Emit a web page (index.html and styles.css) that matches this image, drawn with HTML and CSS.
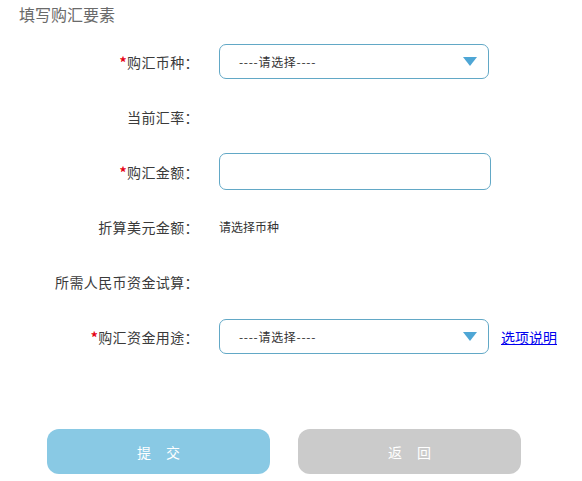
FILE: index.html
```html
<!DOCTYPE html>
<html lang="zh-CN">
<head>
<meta charset="utf-8">
<title>填写购汇要素</title>
<link rel="stylesheet" href="styles.css">
</head>
<body>
<div class="page">
  <h2 class="title">填写购汇要素</h2>
  <div class="form">
    <div class="row">
      <div class="label"><span class="req">*</span>购汇币种：</div>
      <div class="field">
        <div class="select"><span class="ph">----请选择----</span><span class="arrow"></span></div>
      </div>
    </div>
    <div class="row">
      <div class="label">当前汇率：</div>
      <div class="field"></div>
    </div>
    <div class="row">
      <div class="label"><span class="req">*</span>购汇金额：</div>
      <div class="field"><div class="input"></div></div>
    </div>
    <div class="row">
      <div class="label">折算美元金额：</div>
      <div class="field"><span class="value">请选择币种</span></div>
    </div>
    <div class="row">
      <div class="label">所需人民币资金试算：</div>
      <div class="field"></div>
    </div>
    <div class="row">
      <div class="label"><span class="req">*</span>购汇资金用途：</div>
      <div class="field">
        <div class="select"><span class="ph">----请选择----</span><span class="arrow"></span></div>
        <a class="link" href="#">选项说明</a>
      </div>
    </div>
  </div>
  <div class="buttons">
    <button class="btn btn-submit">提 交</button>
    <button class="btn btn-back">返 回</button>
  </div>
</div>
</body>
</html>
```

FILE: styles.css
```css
html, body {
  margin: 0;
  padding: 0;
  background: #fff;
}
body {
  font-family: "Noto Sans CJK SC", "Noto Sans", sans-serif;
  color: #333;
}
.page {
  width: 582px;
}
.title {
  margin: 0;
  height: 34px;
  padding-left: 19px;
  font-size: 16px;
  font-weight: normal;
  color: #6a6a6a;
  line-height: 28px;
}
.form {
  display: flex;
  flex-direction: column;
}
.row {
  display: flex;
  align-items: center;
  height: 55px;
}
.label {
  width: 199px;
  text-align: right;
  font-size: 14px;
  color: #3a3a3a;
  flex: none;
  letter-spacing: 0.4px;
}
.req {
  color: #e60012;
  font-weight: bold;
}
.field {
  margin-left: 20px;
  display: flex;
  align-items: center;
}
.select {
  box-sizing: border-box;
  width: 270px;
  height: 35px;
  border: 1px solid #62a8c6;
  border-radius: 7px;
  display: flex;
  align-items: center;
  justify-content: space-between;
  padding: 0 11px 0 19px;
}
.ph {
  font-size: 12px;
  color: #333;
  letter-spacing: 0.7px;
}
.arrow {
  width: 0;
  height: 0;
  border-left: 7px solid transparent;
  border-right: 7px solid transparent;
  border-top: 9px solid #4ea6d5;
}
.input {
  box-sizing: border-box;
  width: 272px;
  height: 37px;
  border: 1px solid #62a8c6;
  border-radius: 7px;
}
.value {
  font-size: 12px;
  color: #333;
}
.link {
  margin-left: 12px;
  font-size: 14px;
  color: #0000ee;
  text-decoration: underline;
}
.buttons {
  display: flex;
  gap: 28px;
  padding-left: 47px;
  margin-top: 65px;
}
.btn {
  width: 223px;
  height: 45px;
  border: none;
  border-radius: 12px;
  font-family: "Noto Sans CJK SC", sans-serif;
  font-size: 14px;
  color: #fff;
  letter-spacing: 6px;
  padding: 0 0 0 6px;
}
.btn-submit {
  background: #89c9e4;
}
.btn-back {
  background: #cbcbcb;
}
```
